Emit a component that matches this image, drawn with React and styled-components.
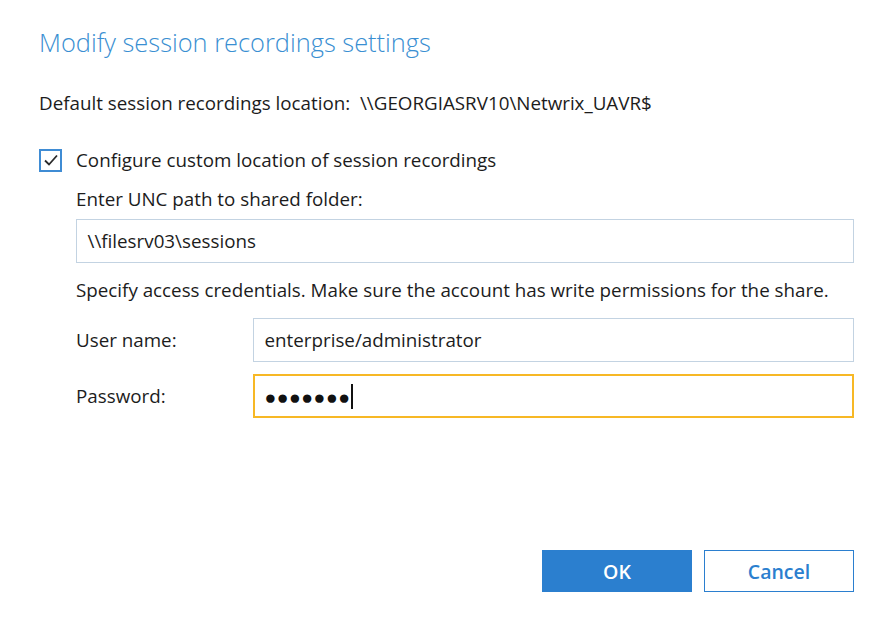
import React from "react";
import styled, { createGlobalStyle } from "styled-components";

const Global = createGlobalStyle`
  html, body { margin: 0; padding: 0; background: #ffffff; }
  body { font-family: "Open Sans", "Noto Sans", sans-serif; color: #1f1f1f; }
  * { box-sizing: border-box; }
`;

const Dialog = styled.div`
  width: 893px;
  height: 618px;
  padding: 24px 39px 0 39px;
  display: flex;
  flex-direction: column;
  background: #fff;
`;

const Title = styled.h1`
  margin: 0;
  font-size: 25.4px;
  font-weight: 300;
  line-height: 36px;
  color: #3a8fd2;
`;

const Text = styled.div`
  font-size: 18.8px;
  line-height: 26px;
  color: #1c1c1c;
  margin-top: ${(p) => p.$mt || 0}px;
  white-space: nowrap;
`;

const CheckRow = styled.label`
  display: flex;
  align-items: center;
  gap: 14px;
  margin-top: ${(p) => p.$mt || 0}px;
  font-size: 18.8px;
  line-height: 26px;
  color: #1c1c1c;
`;

const Box = styled.span`
  width: 23px;
  height: 23px;
  border: 2px solid #3f8cd4;
  display: flex;
  align-items: center;
  justify-content: center;
  background: #fff;
`;

const Indented = styled.div`
  padding-left: 37px;
  display: flex;
  flex-direction: column;
`;

const Input = styled.div`
  height: 44px;
  border: ${(p) => (p.$focus ? "2.5px solid #f7b825" : "1.5px solid #c3d3e2")};
  display: flex;
  align-items: center;
  padding-left: ${(p) => (p.$focus ? 9.5 : 10.5)}px;
  font-size: 18.8px;
  color: #1c1c1c;
  margin-top: ${(p) => p.$mt || 0}px;
  white-space: nowrap;
`;

const FieldRow = styled.div`
  display: grid;
  grid-template-columns: 177px 1fr;
  align-items: center;
  margin-top: ${(p) => p.$mt || 0}px;
`;

const Dots = styled.span`
  font-size: 19.5px;
  letter-spacing: 0.5px;
  display: flex;
  align-items: center;
  color: #111;
`;

const Caret = styled.span`
  width: 1.5px;
  height: 25px;
  background: #111;
  margin-left: 1px;
`;

const Footer = styled.div`
  margin-top: auto;
  margin-bottom: 26px;
  display: flex;
  justify-content: flex-end;
  gap: 12px;
`;

const Button = styled.button`
  width: 150px;
  height: 42px;
  font-family: inherit;
  font-size: 19.5px;
  font-weight: 600;
  border: 1.5px solid #2b7fcf;
  background: ${(p) => (p.$primary ? "#2b7fcf" : "#fff")};
  color: ${(p) => (p.$primary ? "#fff" : "#2b7fcf")};
  padding: 0;
`;

export default function App() {
  return (
    <>
      <Global />
      <Dialog>
        <Title>Modify session recordings settings</Title>
        <Text $mt={30}>Default session recordings location:&nbsp; \\GEORGIASRV10\Netwrix_UAVR$</Text>
        <CheckRow $mt={31}>
          <Box>
            <svg width="16" height="14" viewBox="0 0 16 14">
              <path d="M2 7.5 L6 11.5 L14 2.5" fill="none" stroke="#2a2a2a" strokeWidth="1.8" />
            </svg>
          </Box>
          Configure custom location of session recordings
        </CheckRow>
        <Indented>
          <Text $mt={13}>Enter UNC path to shared folder:</Text>
          <Input $mt={7}>\\filesrv03\sessions</Input>
          <Text $mt={14}>Specify access credentials. Make sure the account has write permissions for the share.</Text>
          <FieldRow $mt={15}>
            <Text>User name:</Text>
            <Input>enterprise/administrator</Input>
          </FieldRow>
          <FieldRow $mt={12}>
            <Text>Password:</Text>
            <Input $focus>
              <Dots>●●●●●●●</Dots>
              <Caret />
            </Input>
          </FieldRow>
        </Indented>
        <Footer>
          <Button $primary>OK</Button>
          <Button>Cancel</Button>
        </Footer>
      </Dialog>
    </>
  );
}
